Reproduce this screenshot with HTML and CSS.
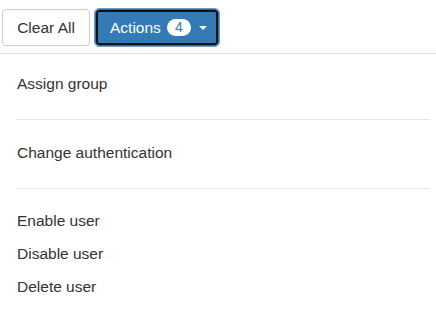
FILE: index.html
```html
<!DOCTYPE html>
<html lang="en">
  <head>
    <meta charset="UTF-8" />
    <meta name="viewport" content="width=device-width, initial-scale=1.0" />
    <title>User Actions</title>
    <link rel="stylesheet" href="styles.css">
  </head>
  <body>
    <div class="toolbar">
      <button class="btn btn-default">Clear All</button>
      <button class="btn btn-primary">
        Actions <span class="badge">4</span> <span class="caret"></span>
      </button>
    </div>

    <ul class="menu">
      <li class="item">Assign group</li>
      <li class="divider"></li>
      <li class="item">Change authentication</li>
      <li class="divider"></li>
      <li class="item">Enable user</li>
      <li class="item">Disable user</li>
      <li class="item">Delete user</li>
    </ul>
  </body>
</html>
```

FILE: styles.css
```css
body {
  margin: 0;
  font-family: "Liberation Sans", Arial, sans-serif;
  color: #333;
  background-color: #fff;
}

.toolbar {
  display: flex;
  gap: 5px;
  padding: 9px 2px 7px;
  border-bottom: 1px solid #ddd;
}

.btn {
  height: 37px;
  padding: 0 14px;
  font-family: inherit;
  font-size: 15.5px;
  border-radius: 4px;
  border: 1px solid #ccc;
  display: flex;
  align-items: center;
  cursor: pointer;
}

.btn-default {
  background-color: #fff;
  color: #333;
  width: 88px;
  justify-content: center;
}

.btn-primary {
  background-color: #337ab7;
  color: #fff;
  border-color: #2e6da4;
  width: 124px;
  gap: 4px;
  box-shadow: inset 0 0 0 2px #111;
  outline: 1px solid #6d9cc9;
  outline-offset: 0;
}

.badge {
  display: inline-block;
  background-color: #fff;
  color: #337ab7;
  border-radius: 9px;
  min-width: 24px;
  height: 17px;
  line-height: 17px;
  font-size: 14px;
  text-align: center;
  margin-left: 2px;
}

.caret {
  display: inline-block;
  width: 0;
  height: 0;
  margin-left: 4px;
  border-top: 4px solid #fff;
  border-left: 4px solid transparent;
  border-right: 4px solid transparent;
}

.menu {
  list-style: none;
  margin: 0;
  padding: 14px 6px 0 16px;
}

.item {
  font-size: 15.5px;
  height: 33px;
  line-height: 32px;
  padding-left: 1px;
}

.divider {
  height: 1px;
  background-color: #e5e5e5;
  margin: 18px 0 16.5px;
}
```
